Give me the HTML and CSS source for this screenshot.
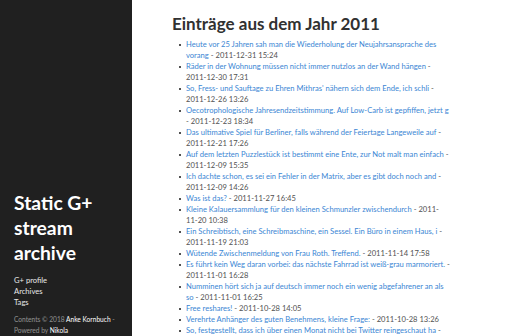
FILE: index.html
```html
<!DOCTYPE html>
<html lang="de">

<head>
    <meta charset="UTF-8">
    <meta name="viewport" content="width=device-width, initial-scale=1.0">
    <title>Static G+ stream archive</title>
    <link rel="stylesheet" href="styles.css">
</head>

<body>
    <div class="sidebar">
        <h1 class="site-title">Static G+ stream archive</h1>
        <ul class="nav">
            <li><a href="#">G+ profile</a></li>
            <li><a href="#">Archives</a></li>
            <li><a href="#">Tags</a></li>
        </ul>
        <p class="footer">Contents © 2018 <a href="#">Anke Kornbuch</a> -<br>Powered by <a href="#">Nikola</a></p>
    </div>

    <div class="content">
        <h1 class="page-title">Einträge aus dem Jahr 2011</h1>
        <ul class="posts">
            <li><a href="#">Heute vor 25 Jahren sah man die Wiederholung der Neujahrsansprache des vorang</a> - 2011-12-31 15:24</li>
            <li><a href="#">Räder in der Wohnung müssen nicht immer nutzlos an der Wand hängen</a> - 2011-12-30 17:31</li>
            <li><a href="#">So, Fress- und Sauftage zu Ehren Mithras' nähern sich dem Ende, ich schli</a> - 2011-12-26 13:26</li>
            <li><a href="#">Oecotrophologische Jahresendzeitstimmung. Auf Low-Carb ist gepfiffen, jetzt g</a> - 2011-12-23 18:34</li>
            <li><a href="#">Das ultimative Spiel für Berliner, falls während der Feiertage Langeweile auf</a> - 2011-12-21 17:26</li>
            <li><a href="#">Auf dem letzten Puzzlestück ist bestimmt eine Ente, zur Not malt man einfach</a> - 2011-12-09 15:35</li>
            <li><a href="#">Ich dachte schon, es sei ein Fehler in der Matrix, aber es gibt doch noch and</a> - 2011-12-09 14:26</li>
            <li><a href="#">Was ist das?</a> - 2011-11-27 16:45</li>
            <li><a href="#">Kleine Kalauersammlung für den kleinen Schmunzler zwischendurch</a> - 2011-<wbr>11-20 10:38</li>
            <li><a href="#">Ein Schreibtisch, eine Schreibmaschine, ein Sessel. Ein Büro in einem Haus, i</a> - 2011-11-19 21:03</li>
            <li><a href="#">Wütende Zwischenmeldung von Frau Roth. Treffend.</a> - 2011-11-14 17:58</li>
            <li><a href="#">Es führt kein Weg daran vorbei: das nächste Fahrrad ist weiß-grau marmoriert.</a> - 2011-11-01 16:28</li>
            <li><a href="#">Numminen hört sich ja auf deutsch immer noch ein wenig abgefahrener an als so</a> - 2011-11-01 16:25</li>
            <li><a href="#">Free reshares!</a> - 2011-10-28 14:05</li>
            <li><a href="#">Verehrte Anhänger des guten Benehmens, kleine Frage:</a> - 2011-10-28 13:26</li>
            <li><a href="#">So, festgestellt, dass ich über einen Monat nicht bei Twitter reingeschaut ha</a> - 2011-10-21 09:12</li>
            <li><a href="#">Noch mehr Fahrräder</a> - 2011-10-19 18:40</li>
        </ul>
    </div>
</body>

</html>
```

FILE: styles.css
```css
* {
    margin: 0;
    padding: 0;
    list-style: none;
    text-decoration: none;
}

body {
    display: flex;
    font-family: Lato, "Liberation Sans", sans-serif;
    font-size: 7.6px;
    line-height: 11px;
    color: #515151;
    background: #fff;
}

a {
    color: #3b86d4;
}

.sidebar {
    flex: 0 0 132px;
    height: 100vh;
    box-sizing: border-box;
    padding: 0 6px 0 14px;
    background: #202020;
    color: rgba(255, 255, 255, .5);
    display: flex;
    flex-direction: column;
    justify-content: flex-end;
}

.site-title {
    font-size: 19.3px;
    line-height: 25px;
    font-weight: 700;
    color: #fff;
    width: 90px;
    margin-bottom: 10px;
}

.nav a {
    color: #e8e8e8;
}

.nav {
    margin-bottom: 6px;
}

.footer {
    font-size: 6.6px;
}

.footer a {
    color: #fff;
}

.content {
    padding: 13px 0 0 40px;
}

.page-title {
    font-size: 17px;
    line-height: 22px;
    font-weight: 700;
    color: #313131;
    margin-bottom: 4px;
}

.posts {
    width: 264px;
    padding-left: 14px;
}

.posts li {
    position: relative;
}

.posts li::before {
    content: "";
    position: absolute;
    left: -7px;
    top: 5px;
    width: 2px;
    height: 2px;
    background: #515151;
}
```
